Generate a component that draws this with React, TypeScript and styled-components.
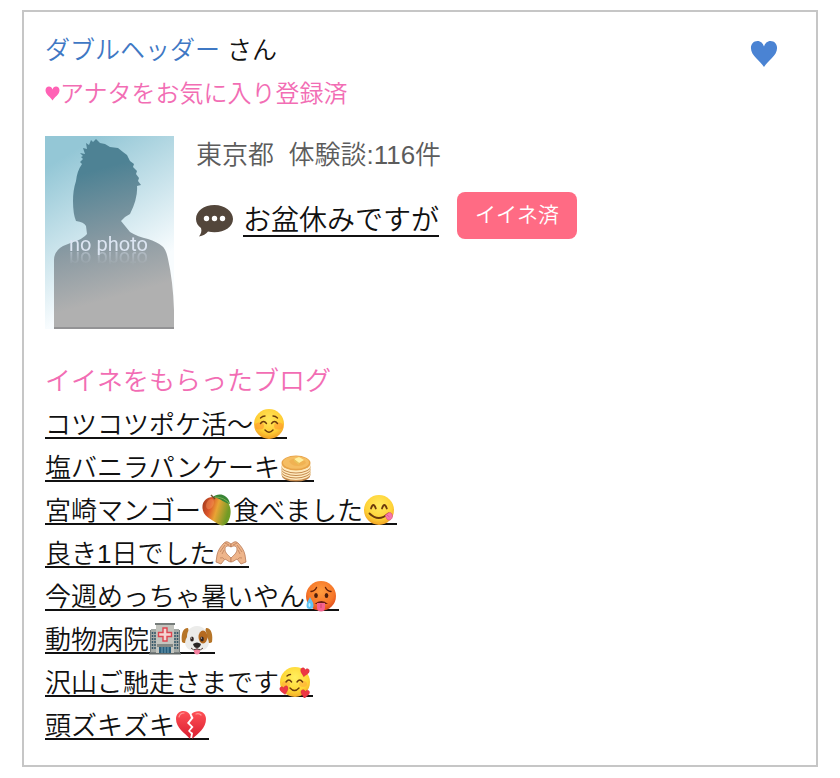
import React, { useId } from "react";
import styled, { createGlobalStyle } from "styled-components";

const GlobalStyle = createGlobalStyle`
  * { box-sizing: border-box; }
  body {
    margin: 0;
    background: #fff;
    color: #111;
    font-family: "Liberation Sans", "Noto Sans CJK JP", sans-serif;
    font-weight: 350;
    font-size: 26px;
  }
`;

const Card = styled.main`
  margin: 10px 22px 11px;
  padding: 17px 22px 18px 21px;
  border: 2px solid #c6c6c6;
`;

const TopBar = styled.header`
  display: flex;
  justify-content: space-between;
  align-items: center;
`;

const UserName = styled.h1`
  margin: 0;
  font-size: 25px;
  font-weight: 350;
  line-height: 43px;
`;

const NameLink = styled.a`
  color: #3f78c4;
  text-decoration: none;
`;

const FavoriteButton = styled.button`
  display: flex;
  margin: 6px 16px 0 0;
  padding: 0;
  border: 0;
  background: none;
  cursor: pointer;
`;

const FavoriteNote = styled.p`
  display: flex;
  align-items: center;
  margin: 0;
  color: #f26db4;
  font-size: 24px;
  line-height: 43px;
`;

const Profile = styled.section`
  display: flex;
  gap: 22px;
  margin-top: 21px;
`;

const PhotoLink = styled.a`
  position: relative;
  display: block;
  flex: none;
  line-height: 0;
  text-decoration: none;
`;

const PhotoCaption = styled.span`
  position: absolute;
  left: 0;
  right: 0;
  top: 98px;
  padding-right: 2px;
  color: #dce5f2;
  font-family: Roboto, sans-serif;
  font-size: 20px;
  font-weight: 400;
  line-height: 20px;
  text-align: center;
  -webkit-box-reflect: below -5px linear-gradient(transparent 20%, rgba(0, 0, 0, 0.5));
`;

const Meta = styled.p`
  margin: 0;
  color: #5c5c5c;
  font-size: 26px;
  line-height: 38px;
`;

const PostRow = styled.div`
  display: flex;
  flex-wrap: wrap;
  align-items: center;
  margin-top: 18px;
`;

const BubbleIcon = styled.svg`
  width: 37px;
  height: 32px;
  margin-top: 10px;
`;

const PostLink = styled.a`
  height: 34px;
  margin: 8px 18px 0 10px;
  border-bottom: 2px solid #111;
  color: #111;
  font-size: 28px;
  line-height: 36px;
  text-decoration: none;
`;

const LikedButton = styled.button`
  height: 47px;
  padding: 0 18px 5px;
  border: 0;
  border-radius: 8px;
  background: #ff6b84;
  color: #fff;
  font: inherit;
  font-size: 21px;
  cursor: pointer;
`;

const SectionTitle = styled.h2`
  margin: 31px 0 0;
  color: #f26db4;
  font-size: 26px;
  font-weight: 350;
  line-height: 43px;
`;

const BlogList = styled.ul`
  margin: 0;
  padding: 0;
  list-style: none;
`;

const BlogItem = styled.li`
  display: flex;
  align-items: center;
  min-height: 43px;
`;

const BlogLink = styled.a`
  display: inline-flex;
  align-items: flex-start;
  height: 29px;
  padding-right: 2px;
  border-bottom: 2px solid #111;
  color: #111;
  line-height: 31px;
  text-decoration: none;
  white-space: nowrap;
`;

const EmojiSvg = styled.svg`
  flex: none;
  width: 32px;
  height: 32px;
  margin-top: -2px;
`;

const HEART =
  "M15 29C11 22 1 17 1 8.500C1 4 4 1 8 1c3.500 0 6 2.500 7 6c1-3.500 3.500-6 7-6c4 0 7 3 7 7.500C29 17 19 22 15 29z";

function Heart({ size, color }: { size: number; color: string }) {
  return (
    <svg width={size} height={size} viewBox="0 0 30 30" aria-hidden="true">
      <path d={HEART} fill={color} />
    </svg>
  );
}

type EmojiName =
  | "smile" | "pancakes" | "mango" | "yum" | "hands"
  | "hot" | "hospital" | "dog" | "hearts" | "broken";

const LABELS: Record<EmojiName, string> = {
  smile: "☺️",
  pancakes: "🥞",
  mango: "🥭",
  yum: "😋",
  hands: "🫶🏼",
  hot: "🥵",
  hospital: "🏥",
  dog: "🐶",
  hearts: "🥰",
  broken: "💔",
};

function Drawing({ name, id }: { name: EmojiName; id: string }) {
  const fill = `url(#${id})`;
  const face = (top: string, mid: string, low: string) => (
    <>
      <defs>
        <radialGradient id={id} cx="0.5" cy="0.35" r="0.68">
          <stop offset="0" stopColor={top} />
          <stop offset="0.65" stopColor={mid} />
          <stop offset="1" stopColor={low} />
        </radialGradient>
      </defs>
      <circle cx="16" cy="16" r="15" fill={fill} />
    </>
  );
  const line = { fill: "none", stroke: "#6b3a0c", strokeWidth: 1.4, strokeLinecap: "round" as const };

  switch (name) {
    case "smile":
      return (
        <>
          {face("#ffe65c", "#ffce35", "#ee9620")}
          <ellipse cx="6.500" cy="18" rx="4.500" ry="3.500" fill="#ff7d2a" opacity="0.4" />
          <ellipse cx="25.500" cy="18" rx="4.500" ry="3.500" fill="#ff7d2a" opacity="0.4" />
          <path {...line} d="M7.500 15.500q3-4 6 0M18.500 15.500q3-4 6 0M7.500 10q2-2 4.500-2M20 8q2.500 0 4.500 2M12 22q4 4.500 8 0" />
        </>
      );
    case "yum":
      return (
        <>
          {face("#ffeb5e", "#ffd338", "#ee9920")}
          <path {...line} strokeWidth="1.800" d="M8 14.500q2.300-7 4.800 0M19 14.500q2.300-7 4.800 0M6.500 19.500q9 9 19 0" />
          <path d="M22 21.500c2-1.500 4-4 6-2.500c2.500 2 1.500 6-1 7c-3 .8-3.500-2-5-4.500z" fill="#f878aa" stroke="#d34d7d" strokeWidth=".6" />
          <path d="m24 21 2.500 2" stroke="#cf4d7e" strokeWidth=".7" />
        </>
      );
    case "hot":
      return (
        <>
          {face("#ff9c3e", "#f67629", "#d94019")}
          <path {...line} stroke="#64200a" d="M6 11.500q4-.5 5.500-4M20.500 7.500q1.500 3.500 5.500 4" />
          <ellipse cx="11" cy="15.500" rx="1.800" ry="2.500" fill="#4e1e0b" />
          <ellipse cx="21.500" cy="15.500" rx="1.800" ry="2.500" fill="#4e1e0b" />
          <path d="M9.500 24q7-6 13.500 0z" fill="#681d13" />
          <path d="M12 23h8v4.500q0 4-4 4t-4-4z" fill="#f4628f" />
          <path d="M16 24v4" stroke="#c83c65" strokeWidth=".8" />
          <path d="M5 17c1 3 3.500 5 3.500 8.500q0 3.500-3.500 3.500t-3.500-3.500C1.500 22 4 20 5 17z" fill="#5dc3f4" />
          <ellipse cx="4.500" cy="25" rx="1" ry="2" fill="#c9f1ff" />
        </>
      );
    case "hearts":
      return (
        <>
          {face("#fff05f", "#ffd735", "#f0a526")}
          <ellipse cx="7" cy="18" rx="4" ry="3" fill="#ff8a3d" opacity="0.35" />
          <ellipse cx="24" cy="18" rx="4" ry="3" fill="#ff8a3d" opacity="0.35" />
          <path {...line} d="M7 16q2.800-4 5.600 0M18 16q2.800-4 5.600 0M11 22q4.500 5 9 0M8 10q1.500-1.500 3.500-1.500" />
          {["translate(22 1) rotate(12) scale(.31)", "translate(0 21) rotate(-12) scale(.3)", "translate(22 23) rotate(8) scale(.31)"].map((t) => (
            <path key={t} transform={t} d={HEART} fill="#ed3744" stroke="#c71930" strokeWidth="1" />
          ))}
        </>
      );
    case "pancakes":
      return (
        <>
          <ellipse cx="16" cy="25" rx="14" ry="5.500" fill="#c48a4e" />
          {[22, 19.500, 17, 14.500].map((y) => (
            <g key={y}>
              <ellipse cx="16" cy={y + 1.5} rx="14.500" ry="6.500" fill="#c58a4d" />
              <ellipse cx="16" cy={y + 0.4} rx="14.500" ry="6.500" fill="#ffebc0" />
            </g>
          ))}
          <ellipse cx="16" cy="12" rx="14.500" ry="7.500" fill="#e7a348" />
          <ellipse cx="16" cy="11.500" rx="13" ry="6.300" fill="#f5bd62" />
          <path d="M9 10q4-3 9-2q7 0 8 4q-3 3-8 3q-7 0-9-5z" fill="#e9a33d" opacity=".4" />
          <path d="m14 8 5-2 5 3-5 3z" fill="#fff0a0" />
          <path d="m14 8 5 4v2l-5-4z" fill="#e9c35b" />
        </>
      );
    case "mango":
      return (
        <>
          <defs>
            <linearGradient id={id} x1="0" y1=".3" x2="1" y2=".6">
              <stop offset="0" stopColor="#a83f20" />
              <stop offset=".25" stopColor="#dc542a" />
              <stop offset=".5" stopColor="#e9a434" />
              <stop offset=".9" stopColor="#709b25" />
            </linearGradient>
          </defs>
          <path d="M12 3C5 3 1 8 1.500 14c.5 8 8 11 14 15c5 4 9 3 12-2c3-6 3-14-1-19c-4-4-9-5-14.500-5z" fill={fill} />
          <ellipse cx="9" cy="10" rx="3.500" ry="5.500" transform="rotate(25 9 10)" fill="#ffae69" opacity=".35" />
          <path d="M12 3C16-1 27-1 29 10c-6-1-8-5-17-7z" fill="#398536" />
          <path d="M14 3q9 0 15 7" fill="none" stroke="#85bb56" strokeWidth=".8" />
          <path d="m10 1 4 4" stroke="#66502a" strokeWidth="1.500" />
        </>
      );
    case "hands":
      return (
        <>
          {[false, true].map((flip) => (
            <g key={String(flip)} transform={flip ? "translate(32 0) scale(-1 1)" : undefined}>
              <path
                d="M1 25L2 18C3 13 6 9 9 6q2-2 4-1l3 2v3c-3-2-6-1-6 2c0 4 3 6 6 9v4c-2 0-4-2-6-3l-4 5z"
                fill="#eeb58b" stroke="#b77855" strokeWidth=".8" strokeLinejoin="round"
              />
              <path d="m5 15 5-7M7 17l2-4M5 21q3-1 4 1m1-16 4 2" fill="none" stroke="#bd805b" strokeWidth=".8" />
            </g>
          ))}
        </>
      );
    case "hospital":
      return (
        <>
          <path d="M1 7h30v23H1z" fill="#777e7e" />
          <path d="M2 6h6v23H2zM24 6h6v23h-6z" fill="#a5aaa6" />
          <path d="M3.500 9v18M6 9v18M26 9v18M28.500 9v18" stroke="#345768" strokeWidth="1.500" strokeDasharray="2 1" />
          <path d="M7 1h18v29H7z" fill="#c3c4be" />
          <path d="M6 0h20v2H6z" fill="#777d7b" />
          <path d="M14 5h4v4.500h4.500v4H18V18h-4v-4.500H9.500v-4H14z" fill="#f5d5d2" stroke="#df4651" strokeWidth="1.400" />
          <path d="M8 21h16v3H8z" fill="#848985" />
          <path d="M10 24h12v7H10z" fill="#285e7c" />
          <path d="M13 24v7M16 24v7M19 24v7" stroke="#86b3c4" strokeWidth=".8" />
          <path d="M0 30h32v1.500H0z" fill="#626866" />
        </>
      );
    case "dog":
      return (
        <>
          <path d="M7 5C1 5 0 13 1 19c3 3 6-1 8-6zM25 5c6 0 7 8 6 14c-3 3-6-1-8-6z" fill="#b67528" />
          <path d="M16 3c7 0 10 5 10 11c4 6 1 12-4 13q-6 2-12 0C5 26 2 20 6 14C6 8 9 3 16 3z" fill="#ececea" />
          <ellipse cx="22" cy="14" rx="4.500" ry="6.500" fill="#b56a20" />
          <ellipse cx="11" cy="16" rx="1.800" ry="2.500" fill="#302421" />
          <ellipse cx="21" cy="16" rx="1.800" ry="2.500" fill="#302421" />
          <circle cx="10.500" cy="15" r=".6" fill="#fff" />
          <circle cx="20.500" cy="15" r=".6" fill="#fff" />
          <path d="M13 26h6v2.500q0 3-3 3t-3-3z" fill="#f581a0" />
          <path d="M12 21q4-3 8 0q-1 4-4 4t-4-4z" fill="#292625" />
          <path d="M16 24v2q-4 2-6-1m6 1q4 2 6-1" fill="none" stroke="#584340" />
        </>
      );
    case "broken":
      return (
        <>
          <defs>
            <linearGradient id={id} x1="0" y1="0" x2="0" y2="1">
              <stop stopColor="#ff5156" />
              <stop offset="1" stopColor="#d81d30" />
            </linearGradient>
          </defs>
          <path d="M14.500 5C11 0 1 1 1 10c0 9 9 14 14 20l1-5-3-3 3-4-4-4 4-5z" fill={fill} />
          <path d="M16.500 5c5-5 14.500-3 14.500 5c0 9-8 15-14 20l1-6-3-2 3.500-4-4-4 4-5z" fill={fill} />
          <path d="M4 8q1-4 5-4m12 1q3-1 5 1" fill="none" stroke="#ff9896" strokeWidth="1.200" strokeLinecap="round" />
        </>
      );
  }
}

function Emoji({ name }: { name: EmojiName }) {
  const id = useId();
  return (
    <EmojiSvg viewBox="0 0 32 32" role="img" aria-label={LABELS[name]}>
      <Drawing name={name} id={id} />
    </EmojiSvg>
  );
}

function Silhouette() {
  return (
    <svg width="129" height="193" viewBox="0 0 129 193" aria-hidden="true">
      <defs>
        <linearGradient id="sky" gradientUnits="userSpaceOnUse" x1="20" y1="20" x2="100" y2="150">
          <stop stopColor="#94c7d6" />
          <stop offset=".9" stopColor="#f8fcfe" />
        </linearGradient>
        <linearGradient id="person" gradientUnits="userSpaceOnUse" x1="45" y1="20" x2="85" y2="165">
          <stop offset=".1" stopColor="#4e8294" />
          <stop offset=".6" stopColor="#8c9ba3" />
          <stop offset=".95" stopColor="#b0b0b0" />
        </linearGradient>
      </defs>
      <path d="M0 0h129v193H0z" fill="url(#sky)" />
      <path
        d="M9 193V124Q9 115 18 110L28 106Q38 103 42 98L41 90Q39 86 31 85Q28 78 28 65Q28 54 31 45Q32 35 37 28L35 26L38 23L36 21L38 20L35 17L40 18L38 12L42 13L41 7L44 9L46 4L48 6L51 3L55 7L60 8L65 11L73 12L78 16L82 19L85 25L89 28L88 31L92 35L91 38L94 42L93 45L96 49L92 50Q93 62 85 78L80 81L76 85L85 96Q93 101 103 103Q112 106 117 110Q121 113 123 123Q128 145 129 174V193z"
        fill="url(#person)"
      />
      <path d="M9 192h120" stroke="#77777b" />
    </svg>
  );
}

function SpeechBubble() {
  return (
    <BubbleIcon viewBox="0 0 37 32" aria-hidden="true">
      <path d="M18.500 0C8 0 0 6 0 14c0 4 2 7 5 9c1 3 0 6-2 8.500c4-.5 7-2.500 9-5q3 .8 6.500.8C29 27.300 37 21.500 37 14S29 0 18.500 0z" fill="#53463b" />
      <circle cx="10.500" cy="13.500" r="2.700" fill="#fff" />
      <circle cx="18.500" cy="13.500" r="2.700" fill="#fff" />
      <circle cx="26.500" cy="13.500" r="2.700" fill="#fff" />
    </BubbleIcon>
  );
}

const BLOGS: (string | { emoji: EmojiName })[][] = [
  ["コツコツポケ活〜", { emoji: "smile" }],
  ["塩バニラパンケーキ", { emoji: "pancakes" }],
  ["宮崎マンゴー", { emoji: "mango" }, "食べました", { emoji: "yum" }],
  ["良き1日でした", { emoji: "hands" }],
  ["今週めっちゃ暑いやん", { emoji: "hot" }],
  ["動物病院", { emoji: "hospital" }, { emoji: "dog" }],
  ["沢山ご馳走さまです", { emoji: "hearts" }],
  ["頭ズキズキ", { emoji: "broken" }],
];

export default function App() {
  return (
    <>
      <GlobalStyle />
      <Card lang="ja">
        <TopBar>
          <UserName>
            <NameLink href="#user">ダブルヘッダー</NameLink> さん
          </UserName>
          <FavoriteButton type="button" aria-label="お気に入り">
            <Heart size={28} color="#4a83d3" />
          </FavoriteButton>
        </TopBar>
        <FavoriteNote>
          <Heart size={15} color="#ff62b5" />
          アナタをお気に入り登録済
        </FavoriteNote>
        <Profile>
          <PhotoLink href="#user">
            <Silhouette />
            <PhotoCaption>no photo</PhotoCaption>
          </PhotoLink>
          <div>
            <Meta>東京都&nbsp; 体験談:116件</Meta>
            <PostRow>
              <SpeechBubble />
              <PostLink href="#post">お盆休みですが</PostLink>
              <LikedButton type="button">イイネ済</LikedButton>
            </PostRow>
          </div>
        </Profile>
        <SectionTitle>イイネをもらったブログ</SectionTitle>
        <BlogList>
          {BLOGS.map((parts, row) => (
            <BlogItem key={row}>
              <BlogLink href={`#blog-${row + 1}`}>
                {parts.map((part, i) =>
                  typeof part === "string" ? <span key={i}>{part}</span> : <Emoji key={i} name={part.emoji} />
                )}
              </BlogLink>
            </BlogItem>
          ))}
        </BlogList>
      </Card>
    </>
  );
}
